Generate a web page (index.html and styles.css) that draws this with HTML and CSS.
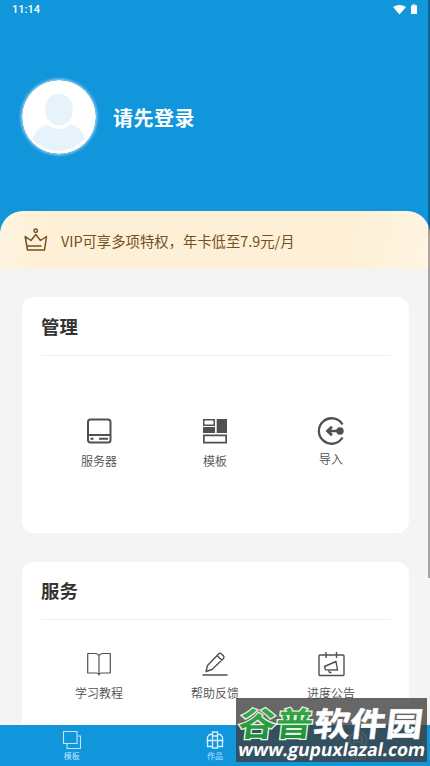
FILE: index.html
```html
<!DOCTYPE html>
<html lang="zh-CN">
<head>
<meta charset="utf-8">
<title>我的</title>
<link rel="stylesheet" href="styles.css">
</head>
<body>
<div class="app">
  <header class="hero">
    <div class="status">
      <span>11:14</span>
      <svg width="26" height="12" viewBox="0 0 26 12" fill="#fff"><path d="M0 3Q6.5-1 13 3L6.500 10.500Z"/><path opacity=".65" d="M19.500 0h3v2h-3z"/><path d="M18 1.500h6V10h-6z"/></svg>
    </div>
    <div class="profile">
      <svg class="avatar" width="74" height="74" viewBox="0 0 74 74">
        <circle cx="37" cy="37" r="37" fill="#fff"/>
        <ellipse cx="37" cy="29.500" rx="14" ry="16" fill="#e6f3fa"/>
        <path d="M10 59C13.500 51 19.500 46 25.500 44.500C32.500 50.500 41.500 50.500 48.500 44.500C55.500 46 60.500 51 63 58C49 75 25 75 10 59Z" fill="#e6f3fa"/>
      </svg>
      <span class="login">请先登录</span>
    </div>
  </header>
  <section class="vip">
    <svg width="24" height="24" viewBox="0 0 24 24" fill="none" stroke="#735123" stroke-width="1.500" stroke-linejoin="round"><circle cx="11.700" cy="2.700" r="1.700"/><path d="M1.200 8.500 3.500 22h17L22.500 8.500l-6 4-4.800-6-4.700 6ZM3 18h14.500"/></svg>
    <span>VIP可享多项特权，年卡低至7.9元/月</span>
  </section>
  <main class="content">
    <section class="card manage">
      <h2>管理</h2>
      <div class="grid">
        <div class="item">
          <svg width="26" height="26" viewBox="0 0 26 26" fill="none" stroke="#505050" stroke-width="2"><rect x="2" y="1.500" width="22.500" height="23" rx="2.500"/><path d="M2 17h22M4.500 20.700h3M13 20.700h9"/></svg>
          <span>服务器</span>
        </div>
        <div class="item">
          <svg width="26" height="26" viewBox="0 0 26 26" fill="#505050"><path fill-rule="evenodd" d="M1 1h12v7H1zM2.500 2.500v4h9v-4zM1 16.500h24V25.500H1zM2.700 18.200v5.600h20.600v-5.600z"/><path d="M1 9h12v6H1zM14.700 1H25v14H14.700z"/></svg>
          <span>模板</span>
        </div>
        <div class="item import">
          <svg width="28" height="28" viewBox="0 0 28 28" fill="none" stroke="#505050" stroke-width="2.300"><path d="M25.500 7.500A12.700 12.700 0 1 0 25.500 20.500"/><path stroke-width="2.700" d="M10.500 14h12M15 9.800 10.500 14l4.500 4.200"/><circle cx="23" cy="14" r="3.700" fill="#505050" stroke="none"/></svg>
          <span>导入</span>
        </div>
      </div>
    </section>
    <section class="card service">
      <h2>服务</h2>
      <div class="grid">
        <div class="item">
          <svg width="26" height="26" viewBox="0 0 26 26" fill="none" stroke="#505050" stroke-width="1.200" stroke-linejoin="round"><path d="M13 4.500Q11.500 2.500 9 2.500H1.700V22H10Q13 22 13 24Q13 22 16 22h8.300V2.500H17Q14.500 2.500 13 4.500ZM13 4.500V24"/></svg>
          <span>学习教程</span>
        </div>
        <div class="item">
          <svg width="26" height="26" viewBox="0 0 26 26" fill="none" stroke="#505050" stroke-width="1.400" stroke-linejoin="round"><path d="M4 20.500 5.500 14.500 16.500 3Q18 1.700 19.500 3L21.500 4.800Q22.500 6 21.500 7.500L10 18.500ZM15 4.500l5 5M.5 24h25"/></svg>
          <span>帮助反馈</span>
        </div>
        <div class="item">
          <svg width="28" height="26" viewBox="0 0 28 26" fill="none" stroke="#505050" stroke-width="1.400" stroke-linejoin="round"><rect x="2" y="4" width="25" height="20.500" rx="1"/><path d="M9 1v6M19.500 1v6M7.500 15.500 19 10.500 20.500 19 8.500 18.800ZM11.500 19l1 2.500h2"/></svg>
          <span>进度公告</span>
        </div>
      </div>
    </section>
  </main>
  <nav class="tabs">
    <div class="tab">
      <svg width="20" height="20" viewBox="0 0 20 20" fill="none" stroke="#bce6ff" stroke-width="1.100"><path d="M1.500 1.500h13.500v12H1.500zM15 6h3.500v12.500H5v-5"/></svg>
      <span>模板</span>
    </div>
    <div class="tab">
      <svg width="20" height="20" viewBox="0 0 20 20" fill="none" stroke="#d4efff" stroke-width="1.300"><path d="M7.500 2h5v16h-5zM7 4.500H4.500L2.500 7v9.500H7M13 4.500h2.500l2 2.500v9.500H13M1.500 10.500h17M7 6h6"/></svg>
      <span>作品</span>
    </div>
    <div class="tab">
      <svg width="20" height="20" viewBox="0 0 20 20" fill="none" stroke="#bce6ff" stroke-width="1.200"><circle cx="10" cy="10" r="8.500"/><path d="M6 15V9q0-4 4-4t4 4v6M6 12h8"/></svg>
      <span>我的</span>
    </div>
  </nav>
  <div class="scrollbar"></div>
  <div class="mark">
    <svg width="191" height="64" viewBox="0 0 191 64">
      <defs><linearGradient id="g" x1="0" y1="0" x2="0" y2="1"><stop offset="0" stop-color="#46b04b"/><stop offset="1" stop-color="#168a3c"/></linearGradient></defs>
      <g transform="translate(4 0) skewX(-7)">
        <text class="brand green" x="2" y="37.500" textLength="74" lengthAdjust="spacingAndGlyphs">谷普</text>
        <text class="brand" x="77" y="37.500" textLength="109" lengthAdjust="spacingAndGlyphs">软件园</text>
      </g>
      <text class="site" transform="translate(10.500 0) skewX(-10)" x="1" y="58" textLength="187" lengthAdjust="spacingAndGlyphs">www.gupuxlazal.com</text>
    </svg>
  </div>
</div>
</body>
</html>
```
FILE: styles.css
```css
* { box-sizing: border-box; }
body {
  margin: 0;
  font-family: "Noto Sans CJK SC", sans-serif;
  color: #505050;
}
svg { display: block; flex: none; }
.app {
  position: relative;
  height: 766px;
  overflow: hidden;
  display: flex;
  flex-direction: column;
  background: linear-gradient(#1296db 0 240px, #f4f4f4 240px);
}
.hero { height: 211px; flex: none; color: #fff; }
.status {
  height: 20px;
  padding: 0 11px 0 12px;
  display: flex;
  align-items: center;
  justify-content: space-between;
  font: 500 11px/20px Roboto, sans-serif;
}
.status svg { margin-top: -1px; }
.profile {
  display: flex;
  align-items: center;
  gap: 17px;
  padding: 60px 0 0 22px;
}
.avatar { border-radius: 50%; box-shadow: 0 0 3px 1px rgba(255, 255, 255, .65); }
.login { font-size: 20px; font-weight: 700; letter-spacing: .5px; }
.vip {
  height: 58px;
  flex: none;
  display: flex;
  align-items: center;
  gap: 13px;
  padding: 0 0 0 24px;
  border-radius: 23px 23px 0 0;
  background: linear-gradient(100deg, #fff5e1 0, #fef0d6 12%, #fef0d6 80%, #fff5e3 100%);
  color: #735123;
  font-size: 14.35px;
}
.content {
  flex: 1;
  min-height: 0;
  padding: 28px 21px 0 22px;
  display: flex;
  flex-direction: column;
  gap: 29px;
}
.card {
  flex: none;
  height: 236px;
  border-radius: 12px;
  background: #fff;
  padding: 0 18px 0 19px;
}
.card h2 {
  margin: 0;
  height: 59px;
  border-bottom: 1px solid #eee;
  color: #333;
  font-size: 18.4px;
  line-height: 58px;
}
.grid { display: grid; grid-template-columns: repeat(3, 116px); }
.item {
  display: flex;
  flex-direction: column;
  align-items: center;
  gap: 8px;
  font-size: 12px;
  font-weight: 350;
  line-height: 18px;
}
.manage .grid { padding-top: 62px; }
.manage .import { margin-top: -1px; gap: 5px; }
.service h2 { height: 58px; line-height: 57px; }
.service .grid { padding-top: 31px; }
.service .item { gap: 7px; }
.tabs {
  height: 41px;
  flex: none;
  display: grid;
  grid-template-columns: repeat(3, 1fr);
  background: #1296db;
  color: #bce6ff;
}
.tab {
  display: flex;
  flex-direction: column;
  align-items: center;
  padding-top: 5px;
  font-size: 8px;
  line-height: 12px;
}
.scrollbar {
  position: absolute;
  right: 0;
  top: 0;
  width: 2px;
  height: 578px;
  background: rgba(0, 0, 0, .32);
}
.mark {
  position: absolute;
  left: 236px;
  top: 698px;
  width: 191px;
  height: 64px;
  background: rgba(60, 60, 60, .78);
}
.brand {
  font-size: 33px;
  font-weight: 700;
  fill: #fff;
  stroke: #fff;
  stroke-width: .6px;
}
.brand.green {
  fill: url(#g);
  stroke: #e4f5df;
  stroke-width: 2.5px;
  paint-order: stroke;
}
.site {
  font: 700 18px "Open Sans", sans-serif;
  fill: #fff;
}
```
